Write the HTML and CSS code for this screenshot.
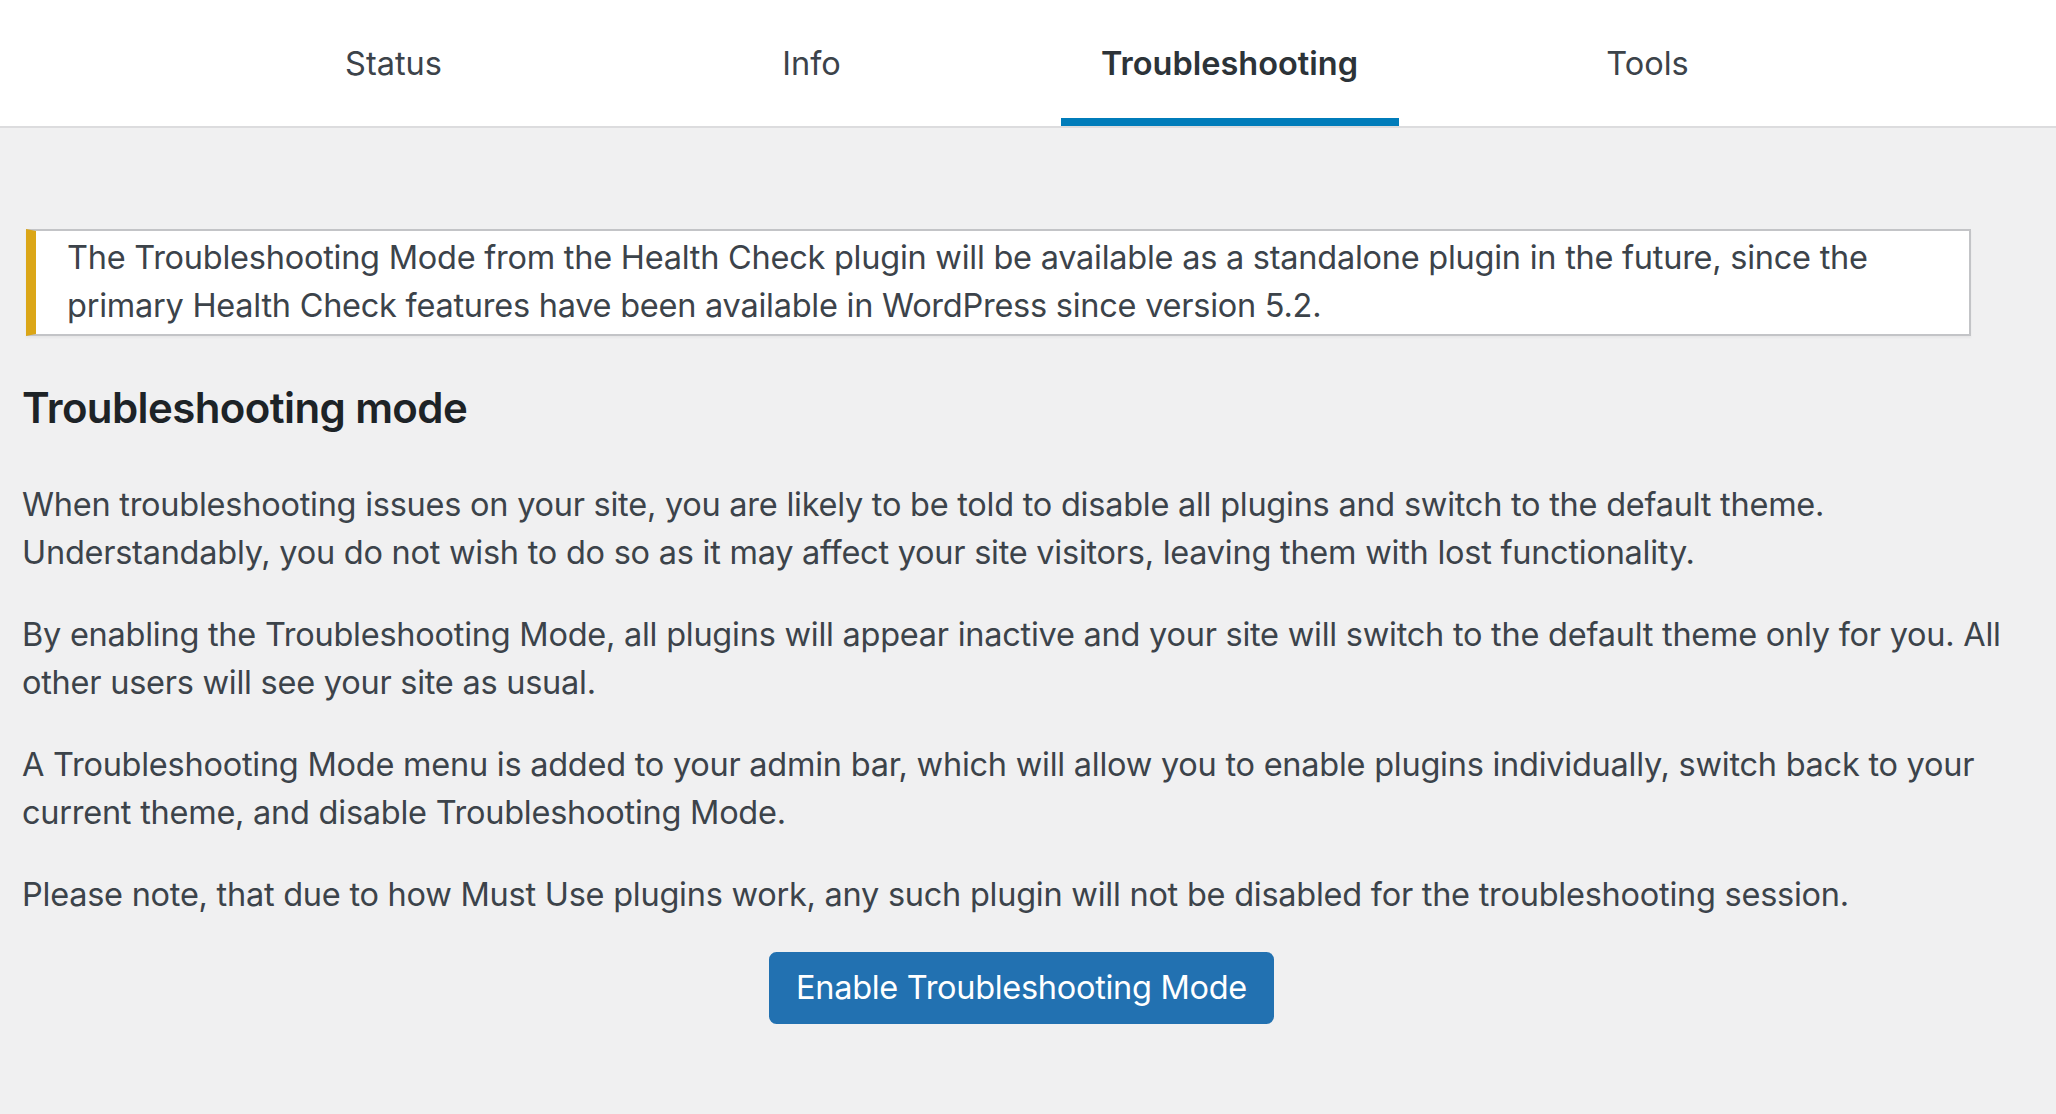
FILE: index.html
```html
<!DOCTYPE html>
<html lang="en">
<head>
<meta charset="utf-8">
<title>Site Health - Troubleshooting</title>
<link rel="stylesheet" href="styles.css">
</head>
<body>
<header class="hc-header">
  <nav class="hc-tabs">
    <a class="hc-tab" href="#">Status</a>
    <a class="hc-tab" href="#">Info</a>
    <a class="hc-tab is-active" href="#">Troubleshooting</a>
    <a class="hc-tab" href="#">Tools</a>
  </nav>
</header>
<main class="hc-body">
  <div class="notice notice-warning">
    <p>The Troubleshooting Mode from the Health Check plugin will be available as a standalone plugin in the future, since the primary Health Check features have been available in WordPress since version 5.2.</p>
  </div>
  <h2 class="hc-title">Troubleshooting mode</h2>
  <p>When troubleshooting issues on your site, you are likely to be told to disable all plugins and switch to the default theme. Understandably, you do not wish to do so as it may affect your site visitors, leaving them with lost functionality.</p>
  <p>By enabling the Troubleshooting Mode, all plugins will appear inactive and your site will switch to the default theme only for you. All other users will see your site as usual.</p>
  <p>A Troubleshooting Mode menu is added to your admin bar, which will allow you to enable plugins individually, switch back to your current theme, and disable Troubleshooting Mode.</p>
  <p>Please note, that due to how Must Use plugins work, any such plugin will not be disabled for the troubleshooting session.</p>
  <div class="hc-actions">
    <button class="button button-primary" type="button">Enable Troubleshooting Mode</button>
  </div>
</main>
</body>
</html>
```
FILE: styles.css
```css
html, body {
  margin: 0;
  padding: 0;
}
body {
  background: #f0f0f1;
  color: #3c434a;
  font-family: Inter, Roboto, "Noto Sans", "Liberation Sans", sans-serif;
  font-size: 32.5px;
  line-height: 48.75px;
  letter-spacing: -0.25px;
}
.hc-header {
  background: #fff;
  border-bottom: 2.5px solid #dcdcde;
  text-align: center;
  padding-right: 15px;
}
.hc-tabs {
  display: inline-grid;
  grid-template-columns: repeat(4, 418px);
}
.hc-tab {
  display: block;
  margin: 0 40px;
  padding: 40px 0 38px;
  line-height: 48px;
  color: #3c434a;
  text-decoration: none;
  letter-spacing: 0;
}
.hc-tab.is-active {
  font-weight: 600;
  color: #2c3338;
  box-shadow: inset 0 -8px #007cba;
}
.hc-body {
  padding: 0 35px 40px 22px;
}
.notice {
  margin: 101px 50px 0 4px;
  background: #fff;
  border: 2.5px solid #c3c4c7;
  border-left: 10px solid #dba617;
  box-shadow: 0 2px 2px rgba(0, 0, 0, 0.04);
  padding: 2.5px 31px;
}
.notice p {
  margin: 0;
}
.hc-title {
  margin: 43px 0 45px;
  font-size: 42px;
  line-height: 57px;
  font-weight: 600;
  letter-spacing: -0.6px;
  color: #1d2327;
}
.hc-body > p {
  margin: 32.5px 0;
}
.hc-actions {
  margin: 32.5px 0;
  text-align: center;
}
.button {
  display: inline-block;
  font-family: inherit;
  font-size: 32.5px;
  line-height: 68px;
  letter-spacing: -0.3px;
  padding: 0 25px;
  border-radius: 7.5px;
  cursor: pointer;
}
.button-primary {
  background: #2271b1;
  border: 2.5px solid #2271b1;
  color: #fff;
}
```
